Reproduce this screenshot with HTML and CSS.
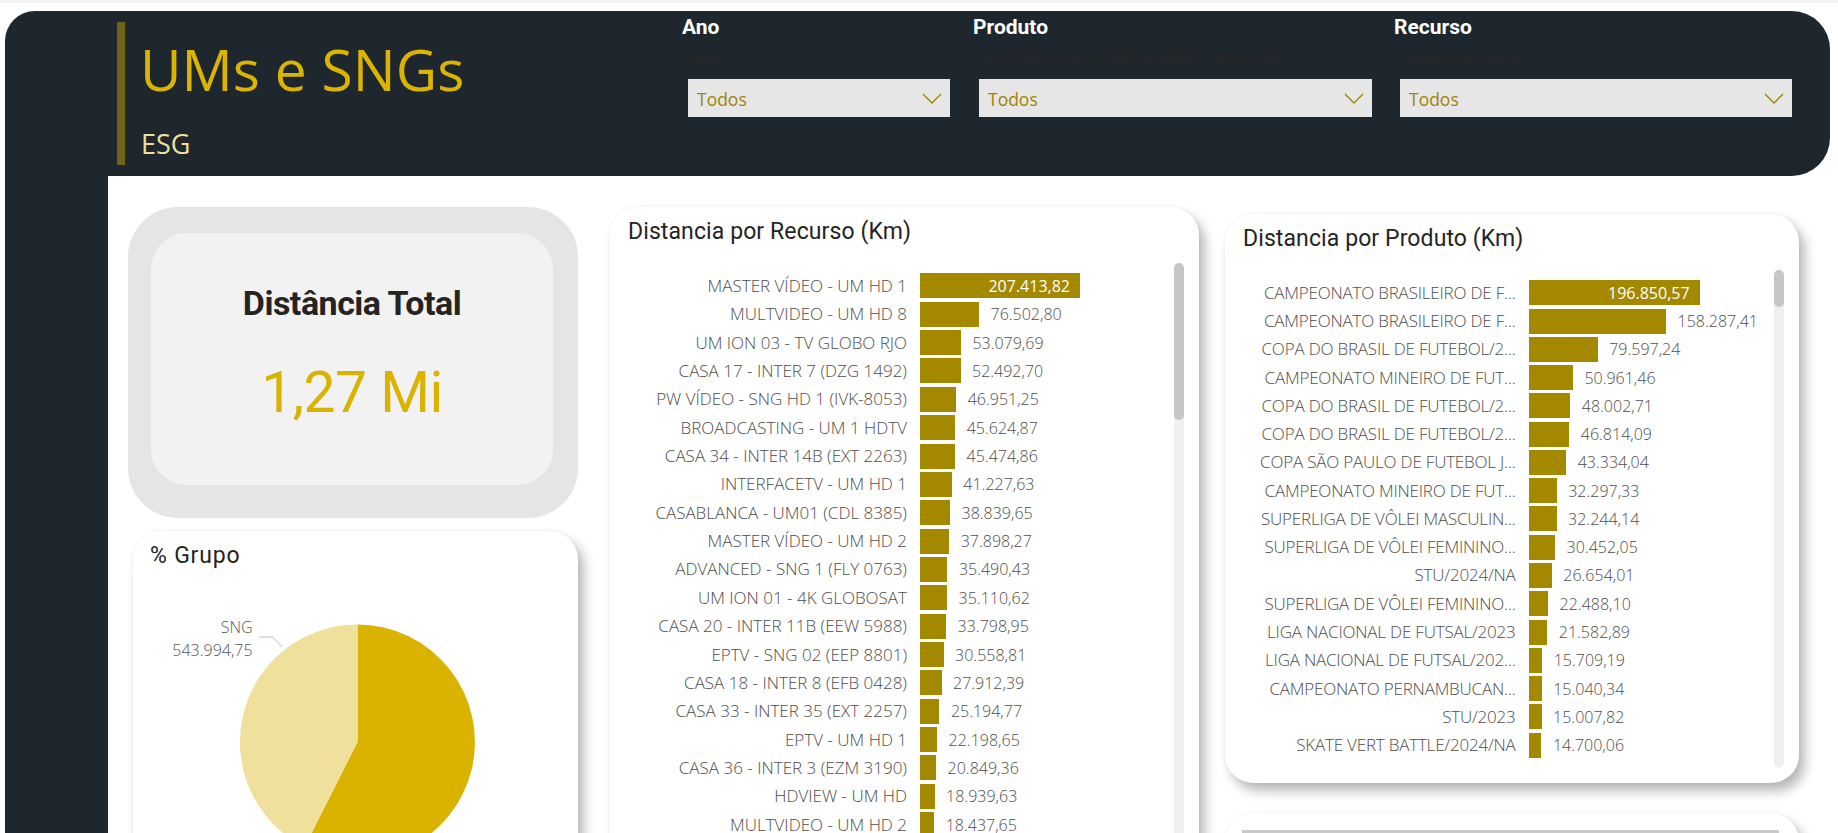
FILE: index.html
```html
<!DOCTYPE html>
<html lang="pt-BR">
<head>
<meta charset="utf-8">
<title>UMs e SNGs - ESG</title>
<link rel="stylesheet" href="styles.css">
</head>
<body>
<div class="page">
  <div class="topstrip"></div>
  <header class="header">
    <div class="brand">
      <div class="brand-bar"></div>
      <div class="brand-text">
        <div class="brand-title">UMs e SNGs</div>
        <div class="brand-sub">ESG</div>
      </div>
    </div>
    <div class="filters">
      <div class="filter f-ano">
        <div class="filter-label">Ano</div>
        <div class="filter-hint">Ano</div>
        <div class="filter-box"><span class="filter-value">Todos</span><svg class="chev" width="20" height="11" viewBox="0 0 20 11"><polyline points="1,1 10,10 19,1" fill="none" stroke="#a08400" stroke-width="1.4"/></svg></div>
      </div>
      <div class="filter f-prod">
        <div class="filter-label">Produto</div>
        <div class="filter-hint">DS_PROJETO_ENGENHARIA_PROJETO_...</div>
        <div class="filter-box"><span class="filter-value">Todos</span><svg class="chev" width="20" height="11" viewBox="0 0 20 11"><polyline points="1,1 10,10 19,1" fill="none" stroke="#a08400" stroke-width="1.4"/></svg></div>
      </div>
      <div class="filter f-rec">
        <div class="filter-label">Recurso</div>
        <div class="filter-hint">Grupo_Recurso</div>
        <div class="filter-box"><span class="filter-value">Todos</span><svg class="chev" width="20" height="11" viewBox="0 0 20 11"><polyline points="1,1 10,10 19,1" fill="none" stroke="#a08400" stroke-width="1.4"/></svg></div>
      </div>
    </div>
  </header>
  <div class="main">
    <div class="sidebar"></div>
    <div class="content">
      <div class="col-left">
        <div class="kpi">
          <div class="kpi-inner">
            <div class="kpi-title">Distância Total</div>
            <div class="kpi-value">1,27 Mi</div>
          </div>
        </div>
        <div class="card pie-card">
          <div class="card-title">% Grupo</div>
          <svg class="pie" width="445" height="300" viewBox="0 0 445 300">
            <path d="M224.5,175 L224.5,57.5 A117.5,117.5 0 1 1 171.5,279.9 Z" fill="#d9b300"/>
            <path d="M224.5,175 L171.5,279.9 A117.5,117.5 0 0 1 224.5,57.5 Z" fill="#efe09b"/>
            <polyline points="126,70 139.5,70 149.4,80" fill="none" stroke="#bdbdbd" stroke-width="1"/>
            <text class="pie-lbl" x="119.6" y="66" text-anchor="end">SNG</text>
            <text class="pie-lbl" x="119.6" y="89" text-anchor="end">543.994,75</text>
          </svg>
        </div>
      </div>

      <div class="card bar-card mid">
        <div class="card-title">Distancia por Recurso (Km)</div>
        <div class="bar-list">
          <div class="bar-row"><div class="bar-label">MASTER VÍDEO - UM HD 1</div><div class="bar-track"><div class="bar" style="width:160px"><span class="bar-value inside">207.413,82</span></div></div></div>
          <div class="bar-row"><div class="bar-label">MULTVIDEO - UM HD 8</div><div class="bar-track"><div class="bar" style="width:59px"></div><span class="bar-value">76.502,80</span></div></div>
          <div class="bar-row"><div class="bar-label">UM ION 03 - TV GLOBO RJO</div><div class="bar-track"><div class="bar" style="width:40.9px"></div><span class="bar-value">53.079,69</span></div></div>
          <div class="bar-row"><div class="bar-label">CASA 17 - INTER 7 (DZG 1492)</div><div class="bar-track"><div class="bar" style="width:40.5px"></div><span class="bar-value">52.492,70</span></div></div>
          <div class="bar-row"><div class="bar-label">PW VÍDEO - SNG HD 1 (IVK-8053)</div><div class="bar-track"><div class="bar" style="width:36.2px"></div><span class="bar-value">46.951,25</span></div></div>
          <div class="bar-row"><div class="bar-label">BROADCASTING - UM 1 HDTV</div><div class="bar-track"><div class="bar" style="width:35.2px"></div><span class="bar-value">45.624,87</span></div></div>
          <div class="bar-row"><div class="bar-label">CASA 34 - INTER 14B (EXT 2263)</div><div class="bar-track"><div class="bar" style="width:35.1px"></div><span class="bar-value">45.474,86</span></div></div>
          <div class="bar-row"><div class="bar-label">INTERFACETV - UM HD 1</div><div class="bar-track"><div class="bar" style="width:31.8px"></div><span class="bar-value">41.227,63</span></div></div>
          <div class="bar-row"><div class="bar-label">CASABLANCA - UM01 (CDL 8385)</div><div class="bar-track"><div class="bar" style="width:30px"></div><span class="bar-value">38.839,65</span></div></div>
          <div class="bar-row"><div class="bar-label">MASTER VÍDEO - UM HD 2</div><div class="bar-track"><div class="bar" style="width:29.2px"></div><span class="bar-value">37.898,27</span></div></div>
          <div class="bar-row"><div class="bar-label">ADVANCED - SNG 1 (FLY 0763)</div><div class="bar-track"><div class="bar" style="width:27.4px"></div><span class="bar-value">35.490,43</span></div></div>
          <div class="bar-row"><div class="bar-label">UM ION 01 - 4K GLOBOSAT</div><div class="bar-track"><div class="bar" style="width:27.1px"></div><span class="bar-value">35.110,62</span></div></div>
          <div class="bar-row"><div class="bar-label">CASA 20 - INTER 11B (EEW 5988)</div><div class="bar-track"><div class="bar" style="width:26.1px"></div><span class="bar-value">33.798,95</span></div></div>
          <div class="bar-row"><div class="bar-label">EPTV - SNG 02 (EEP 8801)</div><div class="bar-track"><div class="bar" style="width:23.6px"></div><span class="bar-value">30.558,81</span></div></div>
          <div class="bar-row"><div class="bar-label">CASA 18 - INTER 8 (EFB 0428)</div><div class="bar-track"><div class="bar" style="width:21.5px"></div><span class="bar-value">27.912,39</span></div></div>
          <div class="bar-row"><div class="bar-label">CASA 33 - INTER 35 (EXT 2257)</div><div class="bar-track"><div class="bar" style="width:19.4px"></div><span class="bar-value">25.194,77</span></div></div>
          <div class="bar-row"><div class="bar-label">EPTV - UM HD 1</div><div class="bar-track"><div class="bar" style="width:17.1px"></div><span class="bar-value">22.198,65</span></div></div>
          <div class="bar-row"><div class="bar-label">CASA 36 - INTER 3 (EZM 3190)</div><div class="bar-track"><div class="bar" style="width:16.1px"></div><span class="bar-value">20.849,36</span></div></div>
          <div class="bar-row"><div class="bar-label">HDVIEW - UM HD</div><div class="bar-track"><div class="bar" style="width:14.6px"></div><span class="bar-value">18.939,63</span></div></div>
          <div class="bar-row"><div class="bar-label">MULTVIDEO - UM HD 2</div><div class="bar-track"><div class="bar" style="width:14.2px"></div><span class="bar-value">18.437,65</span></div></div>
        </div>
        <div class="scroll scroll-mid"><div class="thumb"></div></div>
      </div>

      <div class="col-right">
        <div class="card bar-card right">
          <div class="card-title">Distancia por Produto (Km)</div>
          <div class="bar-list">
            <div class="bar-row"><div class="bar-label">CAMPEONATO BRASILEIRO DE F...</div><div class="bar-track"><div class="bar" style="width:171px"><span class="bar-value inside">196.850,57</span></div></div></div>
            <div class="bar-row"><div class="bar-label">CAMPEONATO BRASILEIRO DE F...</div><div class="bar-track"><div class="bar" style="width:137.5px"></div><span class="bar-value">158.287,41</span></div></div>
            <div class="bar-row"><div class="bar-label">COPA DO BRASIL DE FUTEBOL/2...</div><div class="bar-track"><div class="bar" style="width:69.1px"></div><span class="bar-value">79.597,24</span></div></div>
            <div class="bar-row"><div class="bar-label">CAMPEONATO MINEIRO DE FUT...</div><div class="bar-track"><div class="bar" style="width:44.3px"></div><span class="bar-value">50.961,46</span></div></div>
            <div class="bar-row"><div class="bar-label">COPA DO BRASIL DE FUTEBOL/2...</div><div class="bar-track"><div class="bar" style="width:41.7px"></div><span class="bar-value">48.002,71</span></div></div>
            <div class="bar-row"><div class="bar-label">COPA DO BRASIL DE FUTEBOL/2...</div><div class="bar-track"><div class="bar" style="width:40.7px"></div><span class="bar-value">46.814,09</span></div></div>
            <div class="bar-row"><div class="bar-label">COPA SÃO PAULO DE FUTEBOL J...</div><div class="bar-track"><div class="bar" style="width:37.6px"></div><span class="bar-value">43.334,04</span></div></div>
            <div class="bar-row"><div class="bar-label">CAMPEONATO MINEIRO DE FUT...</div><div class="bar-track"><div class="bar" style="width:28.1px"></div><span class="bar-value">32.297,33</span></div></div>
            <div class="bar-row"><div class="bar-label">SUPERLIGA DE VÔLEI MASCULIN...</div><div class="bar-track"><div class="bar" style="width:28px"></div><span class="bar-value">32.244,14</span></div></div>
            <div class="bar-row"><div class="bar-label">SUPERLIGA DE VÔLEI FEMININO...</div><div class="bar-track"><div class="bar" style="width:26.5px"></div><span class="bar-value">30.452,05</span></div></div>
            <div class="bar-row"><div class="bar-label">STU/2024/NA</div><div class="bar-track"><div class="bar" style="width:23.2px"></div><span class="bar-value">26.654,01</span></div></div>
            <div class="bar-row"><div class="bar-label">SUPERLIGA DE VÔLEI FEMININO...</div><div class="bar-track"><div class="bar" style="width:19.5px"></div><span class="bar-value">22.488,10</span></div></div>
            <div class="bar-row"><div class="bar-label">LIGA NACIONAL DE FUTSAL/2023</div><div class="bar-track"><div class="bar" style="width:18.7px"></div><span class="bar-value">21.582,89</span></div></div>
            <div class="bar-row"><div class="bar-label">LIGA NACIONAL DE FUTSAL/202...</div><div class="bar-track"><div class="bar" style="width:13.6px"></div><span class="bar-value">15.709,19</span></div></div>
            <div class="bar-row"><div class="bar-label">CAMPEONATO PERNAMBUCAN...</div><div class="bar-track"><div class="bar" style="width:13.1px"></div><span class="bar-value">15.040,34</span></div></div>
            <div class="bar-row"><div class="bar-label">STU/2023</div><div class="bar-track"><div class="bar" style="width:13px"></div><span class="bar-value">15.007,82</span></div></div>
            <div class="bar-row"><div class="bar-label">SKATE VERT BATTLE/2024/NA</div><div class="bar-track"><div class="bar" style="width:12.8px"></div><span class="bar-value">14.700,06</span></div></div>
          </div>
          <div class="scroll scroll-right"><div class="thumb"></div></div>
        </div>
        <div class="card next-card"><div class="next-bar"></div></div>
      </div>
    </div>
  </div>
</div>
</body>
</html>
```

FILE: styles.css
```css
* { box-sizing: border-box; }
html, body { margin: 0; padding: 0; background: #fff; }
body { font-family: "Open Sans", "Noto Sans", sans-serif; }

.page {
  width: 1838px;
  height: 833px;
  overflow: hidden;
  display: flex;
  flex-direction: column;
  background: #fff;
}
.topstrip { height: 3px; background: #f2f2f2; flex-shrink: 0; }

/* ---------- header ---------- */
.header {
  flex-shrink: 0;
  margin: 8px 8px 0 5px;
  height: 165px;
  background: #1e272d;
  border-radius: 30px 38px 38px 0;
  display: flex;
  padding-left: 112px;
}
.brand { width: 565px; flex-shrink: 0; display: flex; padding-top: 11px; }
.brand-bar { width: 8px; height: 143px; background: #6f6317; }
.brand-text { margin-left: 15px; padding-top: 19px; }
.brand-title { font-size: 57px; line-height: 57px; color: #dab400; white-space: nowrap; }
.brand-sub { margin-top: 32px; padding-left: 1px; font-size: 27px; line-height: 27px; color: #efe0a0; }

.filters { display: flex; }
.filter { display: flex; flex-direction: column; flex-shrink: 0; }
.f-ano { width: 268px; }
.f-prod { width: 399px; margin-left: 23px; }
.f-rec { width: 398px; margin-left: 22px; }
.filter-label {
  margin-top: 6px;
  font-family: Roboto, sans-serif;
  font-weight: 700;
  font-size: 21px;
  line-height: 21px;
  color: #fff;
}
.filter-hint {
  margin-top: 12px;
  padding-left: 11px;
  font-family: Roboto, sans-serif;
  font-weight: 700;
  font-size: 17px;
  line-height: 17px;
  color: #262526;
  white-space: nowrap;
}
.filter-box {
  margin-top: 12px;
  margin-left: 6px;
  height: 38px;
  background: #e6e6e6;
  display: flex;
  justify-content: space-between;
  align-items: flex-start;
  padding: 12px 8px 0 9px;
}
.filter-value { font-size: 17.5px; line-height: 17.5px; color: #a08400; }
.chev { margin-top: 2px; display: block; }

/* ---------- body ---------- */
.main { flex: 1; display: flex; min-height: 0; }
.sidebar { width: 103px; margin-left: 5px; background: #1e272d; flex-shrink: 0; }
.content { flex: 1; display: flex; align-items: flex-start; background: #fff; }

.col-left { margin-left: 20px; margin-top: 31px; width: 450px; flex-shrink: 0; }
.kpi {
  height: 311px;
  background: #e5e5e5;
  border-radius: 50px;
  padding: 26px 25px 33px 23px;
}
.kpi-inner {
  height: 100%;
  background: #f2f2f2;
  border-radius: 36px;
  display: flex;
  flex-direction: column;
  align-items: center;
  padding-top: 53px;
}
.kpi-title {
  font-family: Roboto, sans-serif;
  font-weight: 700;
  font-size: 34px;
  line-height: 34px;
  letter-spacing: -0.5px;
  color: #252423;
}
.kpi-value {
  margin-top: 44px;
  font-family: Roboto, sans-serif;
  font-size: 57px;
  line-height: 57px;
  letter-spacing: -0.5px;
  color: #d9b300;
}

.card {
  background: #fff;
  border-radius: 28px;
  box-shadow: 6px 8px 12px rgba(0, 0, 0, 0.28), 0 0 4px rgba(0, 0, 0, 0.05);
  position: relative;
}
.card-title {
  padding: 13px 18px 0;
  font-family: Roboto, sans-serif;
  font-weight: 400;
  font-size: 23px;
  line-height: 23px;
  letter-spacing: 0.1px;
  color: #252423;
  white-space: nowrap;
}
.pie-card { margin-left: 5px; margin-top: 13px; width: 445px; height: 340px; }
.pie-card .card-title { padding-left: 17px; letter-spacing: 0.8px; }
.pie { display: block; }
.pie-lbl { font-family: "Open Sans", sans-serif; font-weight: 300; font-size: 16px; fill: #555; }

.mid { margin-left: 32px; margin-top: 31px; width: 589px; height: 700px; flex-shrink: 0; }
.col-right { margin-left: 26px; margin-top: 38px; width: 574px; flex-shrink: 0; }
.right { height: 569px; }
.next-card { margin-top: 30px; height: 100px; padding: 17px 20px 0 17px; }
.next-bar { height: 8px; background: #c9c9c9; }

.bar-list { margin-top: 28.7px; display: flex; flex-direction: column; }
.bar-row { height: 28.37px; display: flex; align-items: center; }
.right .bar-row { height: 28.27px; }
.bar-label {
  width: 289px;
  margin-left: 8px;
  flex-shrink: 0;
  text-align: right;
  font-size: 17px;
  font-weight: 300;
  line-height: 20px;
  color: #4f4d4b;
  white-space: nowrap;
}
.right .bar-label { width: 282.6px; letter-spacing: -0.2px; }
.bar-track { margin-left: 13px; display: flex; align-items: center; }
.bar {
  height: 25px;
  background: #a38800;
  flex-shrink: 0;
  display: flex;
  justify-content: flex-end;
  align-items: center;
}
.bar-value { margin-left: 11.5px; font-size: 16px; font-weight: 300; line-height: 20px; color: #4f4d4b; white-space: nowrap; }
.bar-value.inside { margin-left: 0; padding-right: 10px; color: #fff; font-weight: 400; }

.scroll {
  position: absolute;
  top: 56px;
  right: 15px;
  width: 10px;
  background: #efefef;
  border-radius: 5px;
}
.thumb { background: #c6c6c6; border-radius: 5px; }
.scroll-mid { height: 640px; }
.scroll-mid .thumb { height: 157px; }
.scroll-right { height: 498px; }
.scroll-right .thumb { height: 37px; }
```
